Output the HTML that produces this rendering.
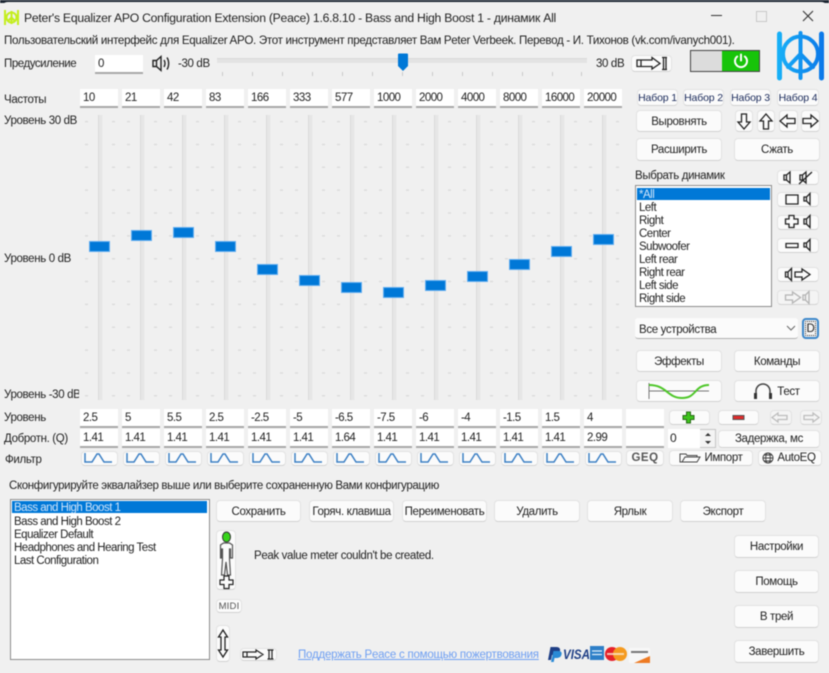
<!DOCTYPE html>
<html><head><meta charset="utf-8">
<style>
html,body{margin:0;padding:0;background:#f0f0f0;}
#w{position:relative;width:829px;height:673px;overflow:hidden;background:#f0f0f0;font:11.5px "Liberation Sans","Noto Sans CJK SC",sans-serif;letter-spacing:-.35px;color:#222;filter:blur(.45px);}
#w div,#w svg{position:absolute;}
.t{white-space:nowrap;line-height:14px;height:14px;margin-top:1px;}
.l{letter-spacing:-.5px;}
.b{box-sizing:border-box;background:#fbfbfb;border:1px solid #e2e2e2;border-bottom-color:#d2d2d2;border-radius:4px;text-align:center;white-space:nowrap;padding-top:1px;}
.e{box-sizing:border-box;background:#fff;border-bottom:2px solid #a8a8a8;padding-left:3px;width:38px;height:19px;line-height:18px;font-size:11.500px;letter-spacing:-.55px;white-space:nowrap;}
.tr{left:0;width:5px;top:115px;height:285px;background:#e6e6e6;border-left:1px solid #dadada;border-right:1px solid #ececec;box-sizing:border-box;}
.h{width:21px;height:11px;background:#0078d7;box-shadow:0 0 0 1px #62aef0 inset;}
.s{fill:none;stroke:#222;}
</style></head><body>
<div id="w">
<!-- top dark band -->
<div style="left:0;top:0;width:829px;height:3px;background:#1b2632"></div>
<div style="left:0;top:2px;width:829px;height:12px;background:#f0f0f0;border-radius:8px 8px 0 0"></div>

<!-- title bar -->
<svg style="left:3px;top:9px" width="17" height="17" viewBox="0 0 17 17"><g fill="none" stroke="#c4ee1e" stroke-width="2"><path d="M2 1v15M15 1v15"/><circle cx="8.500" cy="8.500" r="5"/><path d="M8.500 2v13M8.500 8.500L5 12M8.500 8.500L12 12"/></g></svg>
<div class="t" style="left:24px;top:10px;font-size:12.200px;letter-spacing:-.25px">Peter's Equalizer APO Configuration Extension (Peace) 1.6.8.10 - Bass and High Boost 1 - динамик All</div>
<div style="left:711px;top:15px;width:11px;height:1px;background:#333"></div>
<div style="left:756px;top:11px;width:9px;height:9px;border:1px solid #c8c8c8"></div>
<svg style="left:802px;top:10px" width="12" height="12"><path d="M1 1L11 11M11 1L1 11" stroke="#333" stroke-width="1.100"/></svg>

<div class="t" style="left:4px;top:33px;font-size:11.600px;letter-spacing:-.32px">Пользовательский интерфейс для Equalizer APO. Этот инструмент представляет Вам Peter Verbeek. Перевод - И. Тихонов (vk.com/ivanych001).</div>

<!-- preamp -->
<div class="t" style="left:4px;top:56px;letter-spacing:-.45px">Предусиление</div>
<div class="e" style="left:95px;top:55px;width:48px;">0</div>
<svg style="left:152px;top:54px" width="19" height="19" viewBox="0 0 19 19"><path class="s" stroke-width="1.400" d="M1 6.500h3.500L9 2.500v14l-4.500-4H1zM4.500 6.500v6M12 6c1.300 2 1.300 5 0 7M15 3.500c2.200 3.500 2.200 8.500 0 12"/></svg>
<div class="t" style="left:178px;top:56px">-30 dB</div>
<div style="left:217px;top:58px;width:370px;height:4px;background:#e3e3e3;border-top:1px solid #dadada"></div>
<svg style="left:222px;top:72px" width="360" height="5"><path d="M0.500 0v4M30.500 0v4M60.500 0v4M90.500 0v4M120.500 0v4M150.500 0v4M180.500 0v4M210.500 0v4M240.500 0v4M270.500 0v4M300.500 0v4M330.500 0v4M359.500 0v4" stroke="#c8c8c8"/></svg>
<svg style="left:397px;top:53px" width="12" height="19"><path d="M1 1.500q0-1 1-1h8q1 0 1 1V13l-5 5-5-5z" fill="#0078d7"/></svg>
<div class="t" style="left:596px;top:56px">30 dB</div>
<div class="b" style="left:631px;top:55px;width:41px;height:17px"></div>
<svg style="left:635px;top:56px" width="34" height="15" viewBox="0 0 34 15"><path class="s" stroke-width="1.300" d="M2 4h15V1.500L25 7.500 17 13v-2.500H2zM6 4v6.500M28.500 1.500v12M31 1.500v12M27 1.500h5M27 13.500h5"/></svg>
<!-- switch -->
<div style="left:690px;top:50px;width:70px;height:22px;box-sizing:border-box;border:1px solid #444;background:#dcdcdc"></div>
<div style="left:722px;top:51px;width:37px;height:20px;background:#17c40a"></div>
<svg style="left:732px;top:52px" width="18" height="18" viewBox="0 0 18 18"><path d="M5.200 4.500a6 6 0 1 0 7.600 0M9 2.500v6" fill="none" stroke="#fff" stroke-width="2" stroke-linecap="round"/></svg>
<!-- logo -->
<svg style="left:775px;top:30px" width="51" height="51" viewBox="0 0 51 51"><defs><linearGradient id="lg" gradientUnits="userSpaceOnUse" x1="0" y1="0" x2="51" y2="0"><stop offset="0" stop-color="#18b4f8"/><stop offset="1" stop-color="#0a74e8"/></linearGradient></defs><g fill="none" stroke="url(#lg)" stroke-linecap="round"><path stroke-width="5" d="M4.500 4v44M46.500 4v44"/><circle cx="25.500" cy="24" r="17.500" stroke-width="4"/><path stroke-width="4" d="M25.500 3v45M25.500 24L13 37M25.500 24L38 37"/></g></svg>

<!-- frequencies -->
<div class="t" style="left:4px;top:92px">Частоты</div>
<div class="e" style="left:80px;top:89px">10</div><div class="e" style="left:122px;top:89px">21</div><div class="e" style="left:164px;top:89px">42</div><div class="e" style="left:206px;top:89px">83</div><div class="e" style="left:248px;top:89px">166</div><div class="e" style="left:290px;top:89px">333</div><div class="e" style="left:332px;top:89px">577</div><div class="e" style="left:374px;top:89px">1000</div><div class="e" style="left:416px;top:89px">2000</div><div class="e" style="left:458px;top:89px">4000</div><div class="e" style="left:500px;top:89px">8000</div><div class="e" style="left:542px;top:89px">16000</div><div class="e" style="left:584px;top:89px">20000</div>

<!-- level labels -->
<div class="t" style="left:4px;top:113px">Уровень 30 dB</div>
<div class="t" style="left:4px;top:251px">Уровень 0 dB</div>
<div class="t" style="left:4px;top:387px;width:75px;overflow:hidden">Уровень -30 dB</div>

<!-- ticks -->
<svg style="left:80px;top:115px" width="550" height="285"><g stroke="#dcdcdc" stroke-width="3" stroke-dasharray="1.500 21.350" stroke-dashoffset="-5.850"><path d="M6.500 0v285M33.500 0v285M48.500 0v285M75.500 0v285M90.500 0v285M117.500 0v285M132.500 0v285M159.500 0v285M174.500 0v285M201.500 0v285M216.500 0v285M243.500 0v285M258.500 0v285M285.500 0v285M300.500 0v285M327.500 0v285M342.500 0v285M369.500 0v285M384.500 0v285M411.500 0v285M426.500 0v285M453.500 0v285M468.500 0v285M495.500 0v285M510.500 0v285M537.500 0v285"/></g></svg>
<!-- tracks -->
<div class="tr" style="left:98px"></div><div class="tr" style="left:140px"></div><div class="tr" style="left:182px"></div><div class="tr" style="left:224px"></div><div class="tr" style="left:266px"></div><div class="tr" style="left:308px"></div><div class="tr" style="left:350px"></div><div class="tr" style="left:392px"></div><div class="tr" style="left:434px"></div><div class="tr" style="left:476px"></div><div class="tr" style="left:518px"></div><div class="tr" style="left:560px"></div><div class="tr" style="left:602px"></div>
<!-- thumbs -->
<div class="h" style="left:89px;top:241px"></div><div class="h" style="left:131px;top:230px"></div><div class="h" style="left:173px;top:227px"></div><div class="h" style="left:215px;top:241px"></div><div class="h" style="left:257px;top:264px"></div><div class="h" style="left:299px;top:275px"></div><div class="h" style="left:341px;top:282px"></div><div class="h" style="left:383px;top:287px"></div><div class="h" style="left:425px;top:280px"></div><div class="h" style="left:467px;top:271px"></div><div class="h" style="left:509px;top:259px"></div><div class="h" style="left:551px;top:246px"></div><div class="h" style="left:593px;top:234px"></div>

<!-- right: presets -->
<div class="b" style="left:637px;top:89px;width:41px;height:17px;font-size:10.500px;line-height:14px;letter-spacing:-.15px;color:#1a2a5a">Набор 1</div>
<div class="b" style="left:683px;top:89px;width:41px;height:17px;font-size:10.500px;line-height:14px;letter-spacing:-.15px;color:#1a2a5a">Набор 2</div>
<div class="b" style="left:730px;top:89px;width:41px;height:17px;font-size:10.500px;line-height:14px;letter-spacing:-.15px;color:#1a2a5a">Набор 3</div>
<div class="b" style="left:777px;top:89px;width:42px;height:17px;font-size:10.500px;line-height:14px;letter-spacing:-.15px;color:#1a2a5a">Набор 4</div>
<div class="b" style="left:636px;top:110px;width:86px;height:22px;line-height:20px">Выровнять</div>
<div class="b" style="left:735px;top:110px;width:18px;height:22px"></div>
<div class="b" style="left:757px;top:110px;width:18px;height:22px"></div>
<div class="b" style="left:779px;top:110px;width:19px;height:22px"></div>
<div class="b" style="left:801px;top:110px;width:19px;height:22px"></div>
<svg style="left:735px;top:110px" width="85" height="22"><g class="s" stroke-width="1.300"><path d="M6.500 4h5v8H15l-6 7-6-7h3.500z"/><path d="M28.500 19h5v-8H37l-6-7-6 7h3.500z"/><path d="M60 8.500v5h-8V17l-7-6 7-6v3.500z"/><path d="M68 8.500v5h8V17l7-6-7-6v3.500z"/></g></svg>
<div class="b" style="left:636px;top:138px;width:86px;height:23px;line-height:21px">Расширить</div>
<div class="b" style="left:734px;top:138px;width:86px;height:23px;line-height:21px">Сжать</div>
<div class="t" style="left:635px;top:168px">Выбрать динамик</div>

<!-- speaker list -->
<div style="left:635px;top:185px;width:137px;height:122px;box-sizing:border-box;background:#fff;border:1px solid #8c8c8c"></div>
<div style="left:637px;top:188px;width:133px;height:12px;background:#0078d7"></div>
<div class="t l" style="left:639px;top:187px;color:#cfe4fa">*All</div>
<div class="t l" style="left:639px;top:200px">Left</div>
<div class="t l" style="left:639px;top:213px">Right</div>
<div class="t l" style="left:639px;top:226px">Center</div>
<div class="t l" style="left:639px;top:239px">Subwoofer</div>
<div class="t l" style="left:639px;top:252px">Left rear</div>
<div class="t l" style="left:639px;top:265px">Right rear</div>
<div class="t l" style="left:639px;top:278px">Left side</div>
<div class="t l" style="left:639px;top:291px">Right side</div>

<!-- speaker buttons -->
<div class="b" style="left:777px;top:170px;width:42px;height:15px"></div>
<div class="b" style="left:777px;top:192px;width:42px;height:15px"></div>
<div class="b" style="left:777px;top:215px;width:42px;height:15px"></div>
<div class="b" style="left:777px;top:238px;width:42px;height:15px"></div>
<div class="b" style="left:777px;top:267px;width:42px;height:15px"></div>
<div class="b" style="left:777px;top:290px;width:42px;height:15px;background:#f4f4f4"></div>
<svg style="left:777px;top:170px" width="42" height="136"><g class="s" stroke-width="1.300">
<path d="M7 5h2.500L13 2v11l-3.500-3H7zM9.500 5v5"/><path d="M23 5h2.500L29 2v11l-3.500-3H23zM25.500 5v5M22 14L35 2"/>
<path d="M9 25h12v9H9z"/><path d="M27 27h2.500L33 23.500v11L29.500 31H27zM29.500 27v4"/>
<path d="M12 49v-3.500h5V49h4v5h-4v3.500h-5V54H8.500v-5z"/><path d="M27 49h2.500L33 45.500v12L29.500 54H27zM29.500 49v5"/>
<path d="M9 73.500h12v4H9z"/><path d="M27 73h2.500L33 69.500v11L29.500 77H27zM29.500 73v4"/>
<path d="M8.500 102h2.500L14.500 98.500v12L11 107H8.500zM11 102v5"/><path d="M18 102h7v-3l8 5.500-8 5.500v-3h-7z"/>
</g><g fill="none" stroke="#b4b4b4" stroke-width="1.300"><path d="M8.500 125h7v-3l8 5.500-8 5.500v-3h-7z"/><path d="M26 125h2.500L32 121.500v12L28.500 130H26zM28.500 125v5"/></g></svg>

<!-- device dropdown -->
<div style="left:635px;top:318px;width:163px;height:21px;box-sizing:border-box;background:#fbfbfb;border-bottom:1px solid #b0b0b0;border-radius:3px"></div>
<div class="t" style="left:639px;top:322px;">Все устройства</div>
<svg style="left:786px;top:325px" width="10" height="7"><path d="M1 1l4 4 4-4" fill="none" stroke="#666"/></svg>
<div class="b" style="left:802px;top:318px;width:17px;height:21px;line-height:17px;border:2px solid #3b86c9;background:#f4f4f4;outline:1px dotted #333;outline-offset:-4px">D</div>

<div class="b" style="left:636px;top:350px;width:86px;height:22px;line-height:20px">Эффекты</div>
<div class="b" style="left:734px;top:350px;width:86px;height:22px;line-height:20px">Команды</div>
<div class="b" style="left:636px;top:380px;width:86px;height:22px"></div>
<svg style="left:636px;top:380px" width="86" height="22"><path d="M13 3v16M13 11h60" stroke="#777" fill="none"/><path d="M13 5c18 0 18 13 33 13S58 5 73 5" stroke="#4fc72a" stroke-width="2" fill="none"/></svg>
<div class="b" style="left:734px;top:380px;width:86px;height:22px;line-height:20px;padding-left:23px">Тест</div>
<svg style="left:752px;top:382px" width="22" height="18"><path d="M4 14V9a7 7 0 0 1 14 0v5" fill="none" stroke="#444" stroke-width="1.500"/><path d="M2 11h3v6H2zM17 11h3v6h-3z" fill="#333"/></svg>

<!-- level row -->
<div class="t" style="left:4px;top:410px">Уровень</div>
<div class="e" style="left:80px;top:409px">2.5</div><div class="e" style="left:122px;top:409px">5</div><div class="e" style="left:164px;top:409px">5.5</div><div class="e" style="left:206px;top:409px">2.5</div><div class="e" style="left:248px;top:409px">-2.5</div><div class="e" style="left:290px;top:409px">-5</div><div class="e" style="left:332px;top:409px">-6.5</div><div class="e" style="left:374px;top:409px">-7.5</div><div class="e" style="left:416px;top:409px">-6</div><div class="e" style="left:458px;top:409px">-4</div><div class="e" style="left:500px;top:409px">-1.5</div><div class="e" style="left:542px;top:409px">1.5</div><div class="e" style="left:584px;top:409px">4</div><div class="e" style="left:626px;top:409px"></div>
<div class="b" style="left:669px;top:410px;width:41px;height:15px"></div>
<div class="b" style="left:718px;top:410px;width:41px;height:15px"></div>
<div class="b" style="left:770px;top:410px;width:22px;height:15px;background:#f4f4f4"></div>
<div class="b" style="left:800px;top:410px;width:22px;height:15px;background:#f4f4f4"></div>
<svg style="left:669px;top:410px" width="153" height="15"><path d="M17.500 2h4v3.500h3.500v4h-3.500V13h-4V9.500H14v-4h3.500z" fill="#3ec41c" stroke="#2a6a18"/><path d="M64 5.500h11v4H64z" fill="#e02a2a" stroke="#555"/><g fill="none" stroke="#bdbdbd" stroke-width="1.300"><path d="M118 5.500v4h-9V12l-6-4.500L109 3v2.500z"/><path d="M135 5.500v4h9V12l6-4.500L144 3v2.500z"/></g></svg>

<!-- Q row -->
<div class="t" style="left:4px;top:431px">Добротн. (Q)</div>
<div class="e" style="left:80px;top:429px">1.41</div><div class="e" style="left:122px;top:429px">1.41</div><div class="e" style="left:164px;top:429px">1.41</div><div class="e" style="left:206px;top:429px">1.41</div><div class="e" style="left:248px;top:429px">1.41</div><div class="e" style="left:290px;top:429px">1.41</div><div class="e" style="left:332px;top:429px">1.64</div><div class="e" style="left:374px;top:429px">1.41</div><div class="e" style="left:416px;top:429px">1.41</div><div class="e" style="left:458px;top:429px">1.41</div><div class="e" style="left:500px;top:429px">1.41</div><div class="e" style="left:542px;top:429px">1.41</div><div class="e" style="left:584px;top:429px">2.99</div><div class="e" style="left:626px;top:429px"></div>
<div style="left:668px;top:429px;width:32px;height:19px;background:#fff;line-height:18px;padding-left:2px;box-sizing:border-box;font-size:12px">0</div>
<div style="left:700px;top:429px;width:16px;height:19px;box-sizing:border-box;background:#f4f4f4;border:1px solid #c4c4c4;border-left:none"></div>
<svg style="left:703px;top:431px" width="10" height="15"><path d="M5 2l3 3H2zM5 13l3-3H2z" fill="#333"/></svg>
<div class="b" style="left:718px;top:430px;width:102px;height:18px;line-height:15px">Задержка, мс</div>

<!-- filter row -->
<div class="t" style="left:5px;top:452px">Фильтр</div>
<div class="b" style="left:81px;top:451px;width:37px;height:15px"></div><div class="b" style="left:123px;top:451px;width:37px;height:15px"></div><div class="b" style="left:165px;top:451px;width:37px;height:15px"></div><div class="b" style="left:207px;top:451px;width:37px;height:15px"></div><div class="b" style="left:249px;top:451px;width:37px;height:15px"></div><div class="b" style="left:291px;top:451px;width:37px;height:15px"></div><div class="b" style="left:333px;top:451px;width:37px;height:15px"></div><div class="b" style="left:375px;top:451px;width:37px;height:15px"></div><div class="b" style="left:417px;top:451px;width:37px;height:15px"></div><div class="b" style="left:459px;top:451px;width:37px;height:15px"></div><div class="b" style="left:501px;top:451px;width:37px;height:15px"></div><div class="b" style="left:543px;top:451px;width:37px;height:15px"></div><div class="b" style="left:585px;top:451px;width:37px;height:15px"></div>
<svg style="left:81px;top:451px" width="541" height="15"><defs><g id="pk"><path d="M4 2v9h7l5-8h2l5 8h8" fill="none" stroke="#3b7fc4" stroke-width="1.500"/></g></defs><use href="#pk"/><use href="#pk" x="42"/><use href="#pk" x="84"/><use href="#pk" x="126"/><use href="#pk" x="168"/><use href="#pk" x="210"/><use href="#pk" x="252"/><use href="#pk" x="294"/><use href="#pk" x="336"/><use href="#pk" x="378"/><use href="#pk" x="420"/><use href="#pk" x="462"/><use href="#pk" x="504"/></svg>
<div class="b" style="left:626px;top:450px;width:38px;height:16px;line-height:13px;font-weight:bold;font-size:11.500px;color:#555;letter-spacing:.5px">GEQ</div>
<div class="b" style="left:669px;top:450px;width:84px;height:16px;line-height:13px;padding-left:25px">Импорт</div>
<svg style="left:679px;top:452px" width="24" height="12"><path d="M1 10V2h6l1 1.500h10V5H6L3 10zM3 10h15l3-5H6" fill="none" stroke="#444"/></svg>
<div class="b" style="left:758px;top:450px;width:64px;height:16px;line-height:13px;padding-left:13px">AutoEQ</div>
<svg style="left:762px;top:452px" width="12" height="12"><g fill="none" stroke="#444"><circle cx="6" cy="6" r="5"/><ellipse cx="6" cy="6" rx="2.300" ry="5"/><path d="M1 6h10M2 3h8M2 9h8"/></g></svg>

<!-- configuration -->
<div class="t" style="left:9px;top:478px">Сконфигурируйте эквалайзер выше или выберите сохраненную Вами конфигурацию</div>
<div style="left:10px;top:499px;width:200px;height:161px;box-sizing:border-box;background:#fff;border:1px solid #8c8c8c"></div>
<div style="left:12px;top:501px;width:195px;height:12px;background:#0078d7"></div>
<div class="t l" style="left:14px;top:500px;color:#cfe4fa">Bass and High Boost 1</div>
<div class="t l" style="left:14px;top:514px">Bass and High Boost 2</div>
<div class="t l" style="left:14px;top:527px">Equalizer Default</div>
<div class="t l" style="left:14px;top:540px">Headphones and Hearing Test</div>
<div class="t l" style="left:14px;top:553px">Last Configuration</div>

<div class="b" style="left:216px;top:500px;width:85px;height:22px;line-height:20px">Сохранить</div>
<div class="b" style="left:309px;top:500px;width:85px;height:22px;line-height:20px">Горяч. клавиша</div>
<div class="b" style="left:402px;top:500px;width:85px;height:22px;line-height:20px">Переименовать</div>
<div class="b" style="left:494px;top:500px;width:86px;height:22px;line-height:20px">Удалить</div>
<div class="b" style="left:587px;top:500px;width:86px;height:22px;line-height:20px">Ярлык</div>
<div class="b" style="left:680px;top:500px;width:86px;height:22px;line-height:20px">Экспорт</div>

<div class="b" style="left:216px;top:530px;width:20px;height:60px"></div>
<svg style="left:216px;top:530px" width="20" height="60"><ellipse cx="10.500" cy="7" rx="4" ry="5" fill="#36d41a" stroke="#333"/><path stroke="#555" fill="none" stroke-width="1.200" d="M4.500 28V15l3-2h6l3 2v13h-2v-9h-1v10l1 16h-3l-1.500-13-1.500 13h-3l1-16V19h-1v9z"/><path class="s" stroke-width="1.200" d="M8 46h5v4h4v4.500h-4v4H8v-4H4V50h4z"/></svg>
<div class="b" style="left:216px;top:599px;width:26px;height:14px;font-size:9.500px;line-height:11px;color:#555;letter-spacing:.2px">MIDI</div>
<div class="b" style="left:216px;top:625px;width:14px;height:37px"></div>
<svg style="left:216px;top:628px" width="14" height="31"><path class="s" stroke-width="1.300" d="M5 9H2.500L7 2l4.500 7H9v13h2.500L7 29l-4.500-7H5z"/></svg>
<div class="b" style="left:240px;top:648px;width:37px;height:13px"></div>
<svg style="left:242px;top:649px" width="34" height="11"><path class="s" stroke-width="1.200" d="M1 3h13V1l7 4.500L14 10V8H1zM5 3v5M27 1v9M30 1v9M25.500 1h6M25.500 10h6"/></svg>

<div class="t" style="left:254px;top:548px">Peak value meter couldn't be created.</div>

<div class="b" style="left:734px;top:535px;width:85px;height:23px;line-height:21px">Настройки</div>
<div class="b" style="left:734px;top:570px;width:85px;height:23px;line-height:21px">Помощь</div>
<div class="b" style="left:734px;top:605px;width:85px;height:23px;line-height:21px">В трей</div>
<div class="b" style="left:734px;top:640px;width:85px;height:23px;line-height:21px">Завершить</div>

<!-- donate -->
<div class="t" style="left:298px;top:647px;color:#6e9ff2;text-decoration:underline;letter-spacing:-.22px">Поддержать Peace с помощью пожертвования</div>
<svg style="left:546px;top:645px" width="106" height="20" viewBox="0 0 106 20"><path d="M2 15L4.500 2h6c3 0 4 2 3.500 4-.7 3-3 4-6 4H6l-1 5z" fill="#1f3f86"/><path d="M5 17l2.500-11h5c3 0 3.500 2 3 3.500C15 12 13 13 10.500 13h-2l-.8 4z" fill="#2a8ad6"/><path d="M44 1h14v14H44z" fill="#2d7fc8"/><path d="M46 6h10M46 9.500h10" stroke="#dfeefa" stroke-width="1.300"/><circle cx="66" cy="9" r="7" fill="#e6202a"/><circle cx="74" cy="9" r="7" fill="#f59a1f"/><path d="M61 8h17v2H61z" fill="#fbe7d0" opacity=".8"/><path d="M83 3h21v15H83z" fill="#f7f7f7"/><path d="M85 7h17" stroke="#777" stroke-width="2"/><path d="M88 18l16-7v7z" fill="#ee7a22"/><text x="17" y="14" font-family="Liberation Sans" font-size="14" font-style="italic" font-weight="bold" fill="#1f3f86" textLength="27" lengthAdjust="spacingAndGlyphs" letter-spacing="0">VISA</text></svg>
</div>
</body></html>
